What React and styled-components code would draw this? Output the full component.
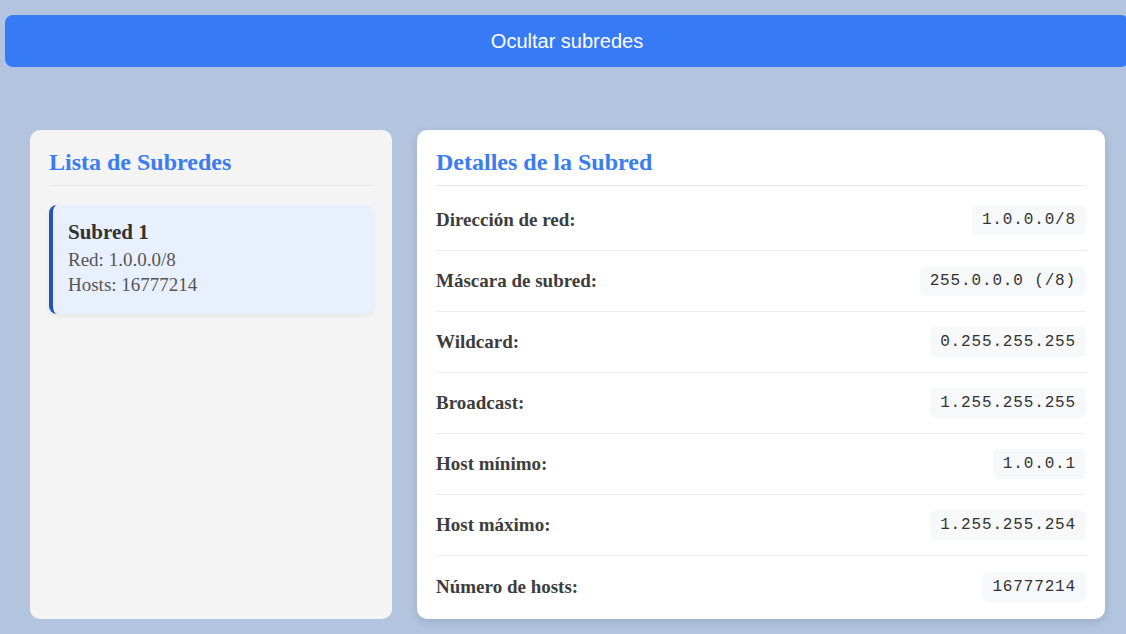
import styled, { createGlobalStyle } from "styled-components";

const subnets = [{ name: "Subred 1", network: "1.0.0.0/8", hosts: 16777214 }];

const details = [
  ["Dirección de red:", "1.0.0.0/8"],
  ["Máscara de subred:", "255.0.0.0 (/8)"],
  ["Wildcard:", "0.255.255.255"],
  ["Broadcast:", "1.255.255.255"],
  ["Host mínimo:", "1.0.0.1"],
  ["Host máximo:", "1.255.255.254"],
  ["Número de hosts:", "16777214"],
];

const App = () => {
  return (
    <Page>
      <GlobalStyle />
      <ToggleButton>Ocultar subredes</ToggleButton>
      <Layout>
        <Panel variant="list">
          <PanelTitle>Lista de Subredes</PanelTitle>
          <SubnetList>
            {subnets.map((s, index) => (
              <SubnetCard key={index} active={index === 0}>
                <SubnetName>{s.name}</SubnetName>
                <SubnetInfo>Red: {s.network}</SubnetInfo>
                <SubnetInfo>Hosts: {s.hosts}</SubnetInfo>
              </SubnetCard>
            ))}
          </SubnetList>
        </Panel>
        <Panel>
          <PanelTitle>Detalles de la Subred</PanelTitle>
          <DetailList>
            {details.map(([label, value]) => (
              <DetailRow key={label}>
                <DetailLabel>{label}</DetailLabel>
                <DetailValue>{value}</DetailValue>
              </DetailRow>
            ))}
          </DetailList>
        </Panel>
      </Layout>
    </Page>
  );
};

const GlobalStyle = createGlobalStyle`
  * {
    box-sizing: border-box;
  }
  body {
    margin: 0;
    background: #b3c5de;
    font-family: "Liberation Serif", serif;
    overflow: hidden;
  }
`;

const Page = styled.div`
  min-height: 634px;
  padding: 15px 0 0 5px;
`;

const ToggleButton = styled.button`
  display: block;
  width: calc(100% + 3px);
  height: 52px;
  border: none;
  border-radius: 8px;
  background: #367af6;
  color: white;
  font-family: "Liberation Sans", Arial, sans-serif;
  font-size: 20px;
  cursor: pointer;
`;

const Layout = styled.div`
  display: grid;
  grid-template-columns: 362px 688px;
  gap: 25px;
  margin-top: 63px;
  padding-left: 25px;
`;

const Panel = styled.div`
  height: 489px;
  overflow: hidden;
  padding: 20px 19px;
  border-radius: 10px;
  background: ${(props) => (props.variant === "list" ? "#f4f4f4" : "#ffffff")};
  box-shadow: ${(props) =>
    props.variant === "list" ? "none" : "0 3px 8px rgba(40, 60, 100, 0.18)"};
`;

const PanelTitle = styled.h2`
  margin: 0;
  padding-bottom: 10px;
  border-bottom: 1px solid #e8e8e8;
  color: #3a7cf2;
  font-size: 24px;
  line-height: 25px;
  font-weight: 700;
`;

const SubnetList = styled.div`
  display: flex;
  flex-direction: column;
  gap: 10px;
  margin-top: 19px;
`;

const SubnetCard = styled.div`
  padding: 15px 15px 17px;
  border-radius: 8px;
  border-left: 4px solid ${(props) => (props.active ? "#2356b0" : "transparent")};
  background: ${(props) => (props.active ? "#e8f0fd" : "white")};
  box-shadow: 0 2px 5px rgba(0, 0, 0, 0.07);
`;

const SubnetName = styled.div`
  color: #333;
  font-size: 21px;
  font-weight: 700;
  line-height: 24px;
  margin-bottom: 3px;
`;

const SubnetInfo = styled.div`
  color: #555;
  font-size: 19px;
  line-height: 25px;
`;

const DetailList = styled.div`
  margin-top: 4px;
`;

const DetailRow = styled.div`
  display: flex;
  align-items: center;
  justify-content: space-between;
  height: 61px;
  border-bottom: 1px solid #ececec;
  &:last-child {
    border-bottom: none;
  }
`;

const DetailLabel = styled.span`
  color: #3d3d3d;
  font-size: 19px;
  font-weight: 700;
`;

const DetailValue = styled.span`
  padding: 5px 10px;
  border-radius: 6px;
  background: #f7f8fa;
  color: #333;
  font-family: "Liberation Mono", "Courier New", monospace;
  font-size: 16px;
  letter-spacing: 0.85px;
  line-height: 20px;
`;

export default App;
